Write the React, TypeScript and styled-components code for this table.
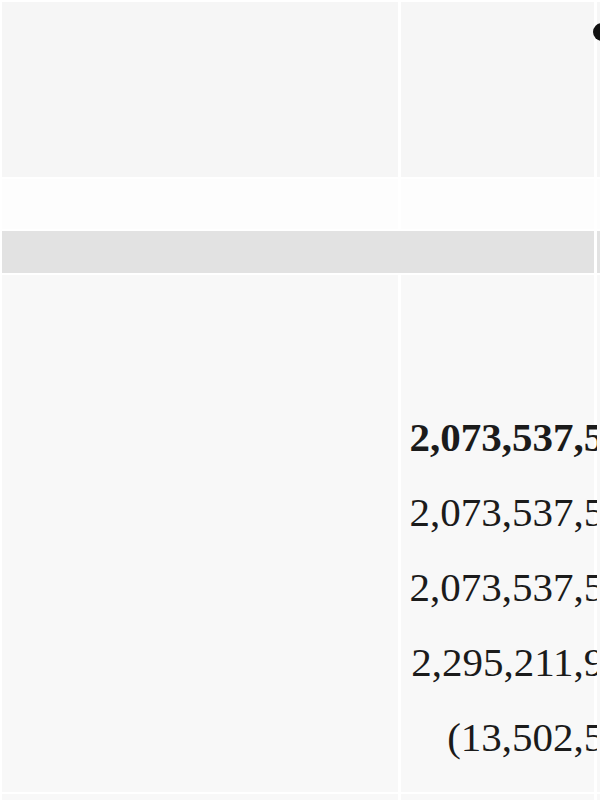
import React from "react";
import styled, { createGlobalStyle } from "styled-components";

const Global = createGlobalStyle`
  html, body {
    margin: 0;
    padding: 0;
    background: #ffffff;
    overflow: hidden;
  }
  body {
    font-family: "Liberation Serif", "Times New Roman", serif;
    color: #1b1b1b;
  }
`;

interface IAmount { value: string, bold?: boolean, negative?: boolean }

const amounts: IAmount[] = [
  { value: "2,073,537,591", bold: true },
  { value: "2,073,537,591" },
  { value: "2,073,537,591" },
  { value: "2,295,211,904" },
  { value: "(13,502,536)", negative: true },
];

export default function App() {
  return (
    <>
      <Global />
      <Sheet>
        <Cell tone="#f6f6f6" height={175} />
        <Cell tone="#f6f6f6" height={175} />
        <Cell tone="#f6f6f6" height={175}>
          <Bullet />
        </Cell>

        <Cell tone="#fdfdfd" height={50} />
        <Cell tone="#fdfdfd" height={50} />
        <Cell tone="#fdfdfd" height={50} />

        <Band />
        <Cell tone="#e2e2e2" height={42} />

        <Cell tone="#f8f8f8" height={517} />
        <AmountCell>
          {amounts.map((a, i) => (
            <Amount key={i} bold={a.bold}>
              <Figure negative={a.negative}>{a.value}</Figure>
            </Amount>
          ))}
        </AmountCell>
        <Cell tone="#f8f8f8" height={517} />

        <Cell tone="#f8f8f8" height={40} />
        <Cell tone="#f8f8f8" height={40} />
        <Cell tone="#f8f8f8" height={40} />
      </Sheet>
    </>
  );
}

const Sheet = styled.div`
  display: grid;
  grid-template-columns: 396px 193px 1fr;
  column-gap: 3px;
  row-gap: 2px;
  padding: 2px 0 0 2px;
  width: 700px;
  background: #ffffff;
`;

const Cell = styled.div<{ tone: string, height: number }>`
  background: ${p => p.tone};
  height: ${p => p.height}px;
`;

const Band = styled.div`
  grid-column: 1 / 3;
  height: 42px;
  background: #e2e2e2;
`;

const Bullet = styled.span`
  display: block;
  width: 18px;
  height: 18px;
  margin: 21px 0 0 -4px;
  border-radius: 50%;
  background: #111111;
`;

const AmountCell = styled.div`
  background: #f8f8f8;
  height: 517px;
  padding-top: 125px;
  box-sizing: border-box;
  display: flex;
  flex-direction: column;
`;

const Amount = styled.div<{ bold?: boolean }>`
  display: flex;
  justify-content: flex-end;
  font-size: 41px;
  line-height: 75px;
  white-space: nowrap;
  font-weight: ${p => (p.bold ? 700 : 400)};
`;

const Figure = styled.span<{ negative?: boolean }>`
  margin-right: -65px;
  padding-right: ${p => (p.negative ? "0" : "0.333em")};
`;
